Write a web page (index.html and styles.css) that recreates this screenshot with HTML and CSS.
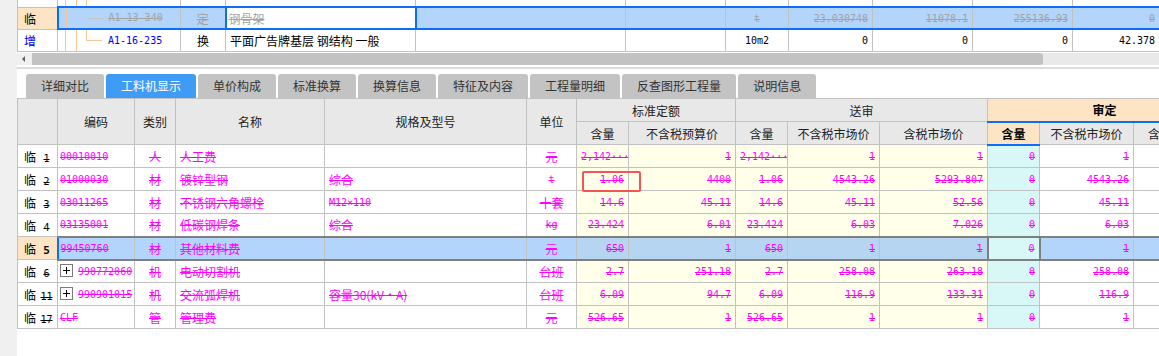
FILE: index.html
```html
<!DOCTYPE html>
<html lang="zh-CN">
<head>
    <meta charset="UTF-8">
    <title>工料机显示</title>
    <link rel="stylesheet" href="styles.css">
</head>
<body>
<div class="app">
    <div class="gutter"></div>
    <div class="main">
        <!-- 清单/定额 -->
        <table class="bill">
            <colgroup>
                <col style="width:40px"><col style="width:123px"><col style="width:45px"><col style="width:190px">
                <col style="width:210px"><col style="width:100px"><col style="width:63px"><col style="width:84px">
                <col style="width:100px"><col style="width:100px"><col style="width:87px">
            </colgroup>
            <tr class="stub">
                <td></td>
                <td class="tree"><svg width="50" height="6"><path d="M7.5 0V6M18.5 0V6M28.5 0V6" stroke="#f6c88e"/></svg></td>
                <td></td><td></td><td></td><td></td><td></td><td></td><td></td><td></td><td></td>
            </tr>
            <tr class="picked">
                <td class="rn">临</td>
                <td class="tree"><svg width="50" height="20"><path d="M7.5 0V20M18.5 0V20M28.5 0V20" stroke="#f6c88e"/><path d="M28.5 10.5H44" stroke="#c9c2b8"/></svg>A1-13-340</td>
                <td class="c">定</td>
                <td class="edit">钢骨架</td>
                <td></td><td></td>
                <td class="c mono">t</td>
                <td class="num">23.030748</td>
                <td class="num">11078.1</td>
                <td class="num">255136.93</td>
                <td class="num">0</td>
            </tr>
            <tr class="added">
                <td class="rn">增</td>
                <td class="tree"><svg width="50" height="21"><path d="M7.5 0V21M18.5 0V21" stroke="#f6c88e"/><path d="M28.5 0V10.5H44" stroke="#f6c88e" fill="none"/></svg>A1-16-235</td>
                <td class="c">换</td>
                <td>平面广告牌基层 钢结构 一般</td>
                <td></td><td></td>
                <td class="c mono">10m2</td>
                <td class="num">0</td>
                <td class="num">0</td>
                <td class="num">0</td>
                <td class="num">42.378</td>
            </tr>
        </table>

        <div class="hscroll">
            <span class="arrow"></span>
            <span class="thumb"></span>
        </div>

        <div class="tabs">
            <span class="tab">详细对比</span>
            <span class="tab active">工料机显示</span>
            <span class="tab">单价构成</span>
            <span class="tab">标准换算</span>
            <span class="tab">换算信息</span>
            <span class="tab">特征及内容</span>
            <span class="tab">工程量明细</span>
            <span class="tab">反查图形工程量</span>
            <span class="tab">说明信息</span>
        </div>

        <div class="grid-wrap">
            <table class="res">
                <colgroup>
                    <col style="width:40px"><col style="width:77px"><col style="width:41px"><col style="width:149px">
                    <col style="width:202px"><col style="width:50px"><col style="width:52px"><col style="width:107px">
                    <col style="width:52px"><col style="width:92px"><col style="width:108px"><col style="width:52px">
                    <col style="width:94px"><col style="width:88px">
                </colgroup>
                <thead>
                    <tr>
                        <th rowspan="2"></th>
                        <th rowspan="2">编码</th>
                        <th rowspan="2">类别</th>
                        <th rowspan="2">名称</th>
                        <th rowspan="2">规格及型号</th>
                        <th rowspan="2">单位</th>
                        <th colspan="2">标准定额</th>
                        <th colspan="3">送审</th>
                        <th colspan="3" class="sd">审定</th>
                    </tr>
                    <tr>
                        <th>含量</th>
                        <th>不含税预算价</th>
                        <th>含量</th>
                        <th>不含税市场价</th>
                        <th>含税市场价</th>
                        <th class="sd sd-q">含量</th>
                        <th>不含税市场价</th>
                        <th class="cut">含税市场价</th>
                    </tr>
                </thead>
                <tbody>
                    <tr>
                        <td class="rn">临<span class="n">1</span></td>
                        <td class="code">00010010</td>
                        <td class="c">人</td>
                        <td>人工费</td>
                        <td></td>
                        <td class="c">元</td>
                        <td class="num y">2,142···</td>
                        <td class="num y">1</td>
                        <td class="num y">2,142···</td>
                        <td class="num y">1</td>
                        <td class="num y">1</td>
                        <td class="num cy">0</td>
                        <td class="num">1</td>
                        <td></td>
                    </tr>
                    <tr>
                        <td class="rn">临<span class="n">2</span></td>
                        <td class="code">01000030</td>
                        <td class="c">材</td>
                        <td>镀锌型钢</td>
                        <td>综合</td>
                        <td class="c mono">t</td>
                        <td class="num y">1.06</td>
                        <td class="num y">4400</td>
                        <td class="num y">1.06</td>
                        <td class="num y">4543.26</td>
                        <td class="num y">5293.807</td>
                        <td class="num cy">0</td>
                        <td class="num">4543.26</td>
                        <td></td>
                    </tr>
                    <tr>
                        <td class="rn">临<span class="n">3</span></td>
                        <td class="code">03011265</td>
                        <td class="c">材</td>
                        <td>不锈钢六角螺栓</td>
                        <td class="mono">M12×110</td>
                        <td class="c">十套</td>
                        <td class="num y">14.6</td>
                        <td class="num y">45.11</td>
                        <td class="num y">14.6</td>
                        <td class="num y">45.11</td>
                        <td class="num y">52.56</td>
                        <td class="num cy">0</td>
                        <td class="num">45.11</td>
                        <td></td>
                    </tr>
                    <tr>
                        <td class="rn">临<span class="n">4</span></td>
                        <td class="code">03135001</td>
                        <td class="c">材</td>
                        <td>低碳钢焊条</td>
                        <td>综合</td>
                        <td class="c mono">kg</td>
                        <td class="num y">23.424</td>
                        <td class="num y">6.01</td>
                        <td class="num y">23.424</td>
                        <td class="num y">6.03</td>
                        <td class="num y">7.026</td>
                        <td class="num cy">0</td>
                        <td class="num">6.03</td>
                        <td></td>
                    </tr>
                    <tr class="cur">
                        <td class="rn">临<span class="n">5</span></td>
                        <td class="code">99450760</td>
                        <td class="c">材</td>
                        <td>其他材料费</td>
                        <td></td>
                        <td class="c">元</td>
                        <td class="num y">650</td>
                        <td class="num y">1</td>
                        <td class="num y">650</td>
                        <td class="num y">1</td>
                        <td class="num y">1</td>
                        <td class="num cy">0</td>
                        <td class="num">1</td>
                        <td></td>
                    </tr>
                    <tr>
                        <td class="rn">临<span class="n">6</span></td>
                        <td class="code"><svg class="plus" width="13" height="13"><rect x="0.5" y="0.5" width="12" height="12" fill="#fff" stroke="#7b7b7b"/><path d="M3 6.5H10M6.5 3V10" stroke="#000"/></svg>990772060</td>
                        <td class="c">机</td>
                        <td>电动切割机</td>
                        <td></td>
                        <td class="c">台班</td>
                        <td class="num y">2.7</td>
                        <td class="num y">251.18</td>
                        <td class="num y">2.7</td>
                        <td class="num y">258.08</td>
                        <td class="num y">263.18</td>
                        <td class="num cy">0</td>
                        <td class="num">258.08</td>
                        <td></td>
                    </tr>
                    <tr>
                        <td class="rn">临<span class="n">11</span></td>
                        <td class="code"><svg class="plus" width="13" height="13"><rect x="0.5" y="0.5" width="12" height="12" fill="#fff" stroke="#7b7b7b"/><path d="M3 6.5H10M6.5 3V10" stroke="#000"/></svg>990901015</td>
                        <td class="c">机</td>
                        <td>交流弧焊机</td>
                        <td>容量30(kV·A)</td>
                        <td class="c">台班</td>
                        <td class="num y">6.09</td>
                        <td class="num y">94.7</td>
                        <td class="num y">6.09</td>
                        <td class="num y">116.9</td>
                        <td class="num y">133.31</td>
                        <td class="num cy">0</td>
                        <td class="num">116.9</td>
                        <td></td>
                    </tr>
                    <tr>
                        <td class="rn">临<span class="n">17</span></td>
                        <td class="code">CLF</td>
                        <td class="c">管</td>
                        <td>管理费</td>
                        <td></td>
                        <td class="c">元</td>
                        <td class="num y">526.65</td>
                        <td class="num y">1</td>
                        <td class="num y">526.65</td>
                        <td class="num y">1</td>
                        <td class="num y">1</td>
                        <td class="num cy">0</td>
                        <td class="num">1</td>
                        <td></td>
                    </tr>
                </tbody>
            </table>
            <div class="mark"></div>
        </div>
    </div>
</div>
</body>
</html>
```

FILE: styles.css
```css
* {
    box-sizing: border-box;
}

body {
    margin: 0;
    width: 1159px;
    height: 356px;
    overflow: hidden;
    background-color: #fff;
    font-family: "Noto Sans CJK SC", sans-serif;
    font-size: 12px;
    color: #000;
}

.app {
    display: flex;
    height: 356px;
}

.gutter {
    width: 17px;
    flex: none;
    background-color: #f0f0f0;
}

.main {
    flex: 1;
    min-width: 0;
    overflow: hidden;
}

table {
    border-collapse: collapse;
    table-layout: fixed;
}

td, th {
    border: 1px solid #c2c2c2;
    padding: 0 4px;
    white-space: nowrap;
    overflow: hidden;
    font-weight: normal;
}

.mono, .num, .code, .n, .tree {
    font-family: "DejaVu Sans Mono", "Noto Sans CJK SC", monospace;
    font-size: 10px;
}

.c {
    text-align: center;
}

.num {
    text-align: right;
}

/* upper grid */
.bill {
    width: 1142px;
}

.bill tr {
    height: 22px;
}

.bill tr.stub {
    height: 7px;
}

.bill tr.stub td {
    border-top: none;
    font-size: 0;
    line-height: 0;
    padding-top: 0;
    padding-bottom: 0;
}

.bill tr.stub svg {
    display: block;
}

.bill .rn {
    padding-left: 6px;
}

.bill .tree {
    padding: 0;
}

.bill .tree svg {
    display: inline-block;
    vertical-align: middle;
}

.bill .edit {
    padding-left: 2px;
}

.picked td {
    background-color: #b3d5fb;
    color: #a3a3a3;
    text-decoration: line-through;
    border-top: 2px solid #0d6ef5;
    border-bottom: 2px solid #0d6ef5;
}

.picked td.rn {
    background-color: #fde4c4;
    color: #000;
    text-decoration: none;
    border-top: 1px solid #c2c2c2;
    border-bottom: 1px solid #c2c2c2;
}

.picked td.tree {
    border-left: 2px solid #0d6ef5;
}

.picked td.edit {
    background-color: #fff;
    border-left: 2px solid #0d6ef5;
    border-right: 2px solid #0d6ef5;
}

.added td.rn,
.added td.tree {
    color: #0000f0;
}

/* scrollbar */
.hscroll {
    display: flex;
    height: 12px;
    margin-top: 1px;
    background-color: #e9e9e9;
}

.arrow {
    width: 15px;
    flex: none;
    background-color: #f0f0f0;
    position: relative;
}

.arrow::before {
    content: "";
    position: absolute;
    left: 5px;
    top: 3px;
    border-top: 3px solid transparent;
    border-bottom: 3px solid transparent;
    border-right: 3px solid #606060;
}

.thumb {
    width: 1011px;
    background-color: #c2c2c2;
    border-radius: 0 3px 3px 0;
}

/* tabs */
.tabs {
    display: flex;
    gap: 2px;
    margin-top: 2px;
    padding: 5px 0 0 9px;
    border-top: 2px solid #dcdcdc;
    height: 31px;
}

.tab {
    padding: 0 15px;
    line-height: 24px;
    background-color: #c3c3c3;
    color: #333;
    border-radius: 3px 3px 0 0;
}

.tab.active {
    background-color: #3f9cf6;
    color: #fff;
}

/* lower grid */
.grid-wrap {
    position: relative;
}

.res {
    width: 1204px;
}

.res tr {
    height: 23px;
}

.res th {
    background-color: #e8e8e8;
    color: #222;
    text-align: center;
}

.res th.cut {
    text-align: left;
    padding-left: 14px;
}

.res th.sd {
    background-color: #fde4c4;
    font-weight: bold;
    color: #000;
    border-bottom: 2px solid #0d6ef5;
}

.res th.sd-q {
    border-top: 2px solid #0d6ef5;
}

.res td {
    color: #f0f;
    text-decoration: line-through;
}

.res td.rn {
    color: #000;
    text-decoration: none;
    padding-left: 6px;
    padding-right: 0;
}

.rn .n {
    display: inline-block;
    width: 17px;
    margin-left: 2px;
    text-align: center;
    text-decoration: line-through;
}

.res td.code {
    padding-left: 2px;
}

.plus {
    vertical-align: middle;
    margin-right: 5px;
    position: relative;
    top: -1px;
}

.res td.y {
    background-color: #ffffea;
}

.res td.cy {
    background-color: #d8f7f7;
}

.cur td {
    background-color: #b3d5fb;
    border-top: 2px solid #7f7f7f;
    border-bottom: 2px solid #7f7f7f;
}

.cur td.rn {
    background-color: #fde4c4;
    border-top: 1px solid #c2c2c2;
    border-bottom: 1px solid #c2c2c2;
}

.cur .n {
    font-weight: bold;
    text-decoration: none;
    font-size: 11px;
}

.cur td.code {
    border-left: 2px solid #0d6ef5;
}

.res .cur td.y {
    background-color: #b5d5f1;
}

.res .cur td.cy {
    background-color: #d8f7f7;
    border-left: 2px solid #7f7f7f;
    border-right: 2px solid #7f7f7f;
}

.mark {
    position: absolute;
    left: 565px;
    top: 73px;
    width: 59px;
    height: 21px;
    border: 2px solid #f25555;
    border-radius: 2px;
}
```
